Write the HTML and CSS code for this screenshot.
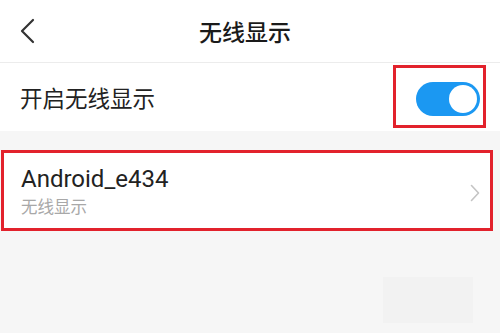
FILE: index.html
```html
<!DOCTYPE html>
<html lang="zh-CN">
<head>
    <meta charset="UTF-8">
    <meta name="viewport" content="width=device-width, initial-scale=1.0">
    <title>无线显示</title>
    <link rel="stylesheet" href="styles.css">
</head>
<body>
    <div class="header">
        <span class="back">
            <svg width="16" height="26" viewBox="0 0 16 26">
                <path d="M14 2 L3 13 L14 24" fill="none" stroke="#333" stroke-width="2.2" stroke-linecap="round" stroke-linejoin="round"/>
            </svg>
        </span>
        <h1 class="title">无线显示</h1>
        <span></span>
    </div>

    <div class="row">
        <span class="rowLabel">开启无线显示</span>
        <span class="mark markSwitch">
            <span class="switch on"><span class="knob"></span></span>
        </span>
    </div>

    <div class="device mark">
        <div class="deviceText">
            <div class="deviceName">Android_e434</div>
            <div class="deviceSub">无线显示</div>
        </div>
        <svg class="arrow" width="10" height="18" viewBox="0 0 10 18">
            <path d="M1.5 1.5 L8.5 9 L1.5 16.5" fill="none" stroke="#c4c4c4" stroke-width="1.6" stroke-linecap="round" stroke-linejoin="round"/>
        </svg>
    </div>

    <div class="footer">
        <div class="ghost"></div>
    </div>
</body>
</html>
```

FILE: styles.css
```css
html {
    font-family: "Noto Sans CJK SC", "Noto Sans", sans-serif;
}
body {
    margin: 0;
    background-color: #f6f6f6;
    color: #222;
}
.header {
    display: grid;
    grid-template-columns: 1fr auto 1fr;
    align-items: center;
    height: 62px;
    padding-right: 10px;
    background-color: #fff;
    border-bottom: 1px solid #ececec;
}
.back {
    display: flex;
    padding-left: 19px;
}
.title {
    margin: 0;
    font-size: 23px;
    font-weight: 500;
    color: #1a1a1a;
}
.row {
    display: flex;
    justify-content: space-between;
    align-items: center;
    height: 68px;
    padding: 0 14px 0 20px;
    background-color: #fff;
}
.rowLabel {
    font-size: 22.5px;
    color: #222;
}
.mark {
    border: 3px solid #e2222c;
}
.markSwitch {
    display: flex;
    padding: 14px 3px 9px 20px;
    margin-top: -2px;
}
.switch {
    display: flex;
    align-items: center;
    justify-content: flex-end;
    box-sizing: border-box;
    width: 64px;
    height: 34px;
    padding: 3px;
    border-radius: 17px;
    background-color: #1b98f2;
}
.knob {
    width: 28px;
    height: 28px;
    border-radius: 50%;
    background-color: #fff;
}
.device {
    display: flex;
    justify-content: space-between;
    align-items: center;
    height: 75px;
    margin: 19px 7px 0 1px;
    padding: 0 10px 0 17px;
    background-color: #fff;
}
.deviceName {
    font-family: Roboto, "Noto Sans", sans-serif;
    font-size: 24px;
    line-height: 28px;
    color: #222;
}
.deviceSub {
    margin-top: 2px;
    font-size: 16.5px;
    line-height: 22px;
    color: #a8a8a8;
}
.arrow {
    margin-top: 4px;
}
.footer {
    display: flex;
    justify-content: flex-end;
    padding: 46px 27px 0 0;
}
.ghost {
    width: 90px;
    height: 46px;
    background-color: #f2f2f2;
}
```
